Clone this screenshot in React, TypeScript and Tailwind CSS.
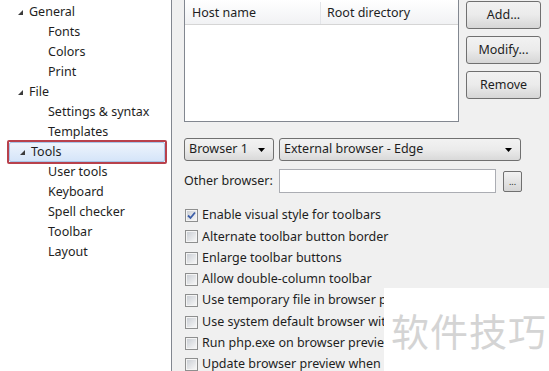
const font = { fontFamily: '"Segoe UI", "Noto Sans", "Liberation Sans", sans-serif' };

type TNode = { label: string; level: 0 | 1; selected?: boolean };

const TREE: TNode[] = [
  { label: 'General', level: 0 },
  { label: 'Fonts', level: 1 },
  { label: 'Colors', level: 1 },
  { label: 'Print', level: 1 },
  { label: 'File', level: 0 },
  { label: 'Settings & syntax', level: 1 },
  { label: 'Templates', level: 1 },
  { label: 'Tools', level: 0, selected: true },
  { label: 'User tools', level: 1 },
  { label: 'Keyboard', level: 1 },
  { label: 'Spell checker', level: 1 },
  { label: 'Toolbar', level: 1 },
  { label: 'Layout', level: 1 },
];

// the last rows sit under the watermark box, so their text is cut at its edge
const OPTIONS = [
  { label: 'Enable visual style for toolbars', checked: true, cut: false },
  { label: 'Alternate toolbar button border', checked: false, cut: false },
  { label: 'Enlarge toolbar buttons', checked: false, cut: false },
  { label: 'Allow double-column toolbar', checked: false, cut: false },
  { label: 'Use temporary file in browser preview', checked: false, cut: true },
  { label: 'Use system default browser with preview', checked: false, cut: true },
  { label: 'Run php.exe on browser preview', checked: false, cut: true },
  { label: 'Update browser preview when saving', checked: false, cut: true },
];

function Arrow() {
  return (
    <svg className="mr-[5px] ml-[17px]" height="7" viewBox="0 0 7 7" width="7">
      <path d="M6 1 6 6 1 6Z" fill="#3c3c3c" />
    </svg>
  );
}

function TreeItem({ node }: { node: TNode }) {
  if (node.selected) {
    return (
      <div className="flex h-[20px] items-center">
        <div className="ml-[7px] flex h-[24px] w-[160px] items-center rounded-[2px] border-2 border-[#b8414c]">
          <div className="flex h-full w-full items-center rounded-[2px] border border-[#a9c5e8] bg-gradient-to-b from-[#eef4fc] to-[#d5e5f9]">
            <svg className="mr-[5px] ml-[9px]" height="7" viewBox="0 0 7 7" width="7">
              <path d="M6 1 6 6 1 6Z" fill="#3c3c3c" />
            </svg>
            <span>{node.label}</span>
          </div>
        </div>
      </div>
    );
  }
  return (
    <div className="flex h-[20px] items-center">
      {node.level === 0 ? <Arrow /> : <span className="w-[48px]" />}
      <span>{node.label}</span>
    </div>
  );
}

function PushButton({ children, className = '' }: { children: string; className?: string }) {
  return (
    <div
      className={`flex items-center justify-center rounded-[3px] border border-[#707070] bg-gradient-to-b from-[#f2f2f2] via-[#ebebeb] to-[#d6d6d6] ${className}`}
    >
      {children}
    </div>
  );
}

function Combo({ label, className }: { label: string; className: string }) {
  return (
    <div
      className={`flex h-[23px] items-center rounded-[3px] border border-[#707070] bg-gradient-to-b from-[#f2f2f2] via-[#ebebeb] to-[#d9d9d9] pr-[8px] pl-[4px] ${className}`}
    >
      <span className="flex-1">{label}</span>
      <svg height="4" viewBox="0 0 7 4" width="7">
        <path d="M0 0h7L3.5 4Z" fill="#000" />
      </svg>
    </div>
  );
}

function CheckBox({ checked }: { checked: boolean }) {
  return (
    <div className="mr-[4px] flex h-[13px] w-[13px] shrink-0 items-center justify-center border border-[#8e8f8f] bg-white">
      <div className="flex h-[11px] w-[11px] items-center justify-center border border-[#f4f4f4] bg-gradient-to-br from-[#cbcfd5] to-[#f6f6f6]">
        {checked ? (
          <svg height="9" viewBox="0 0 9 9" width="9">
            <path d="M1 4.5 3.5 7 8 1.5" fill="none" stroke="#3c5ea8" strokeWidth="1.8" />
          </svg>
        ) : null}
      </div>
    </div>
  );
}

export default function App() {
  return (
    <div
      className="flex h-[371px] w-[549px] overflow-hidden bg-[#f0f0f0] text-[12.5px] text-[#1e1e1e]"
      style={font}
    >
      <div className="h-full w-[172px] shrink-0 border-r border-[#828790] bg-white pt-[2px]">
        {TREE.map((node) => (
          <TreeItem key={node.label} node={node} />
        ))}
      </div>

      <div className="relative flex-1 pl-[12px]">
        <div className="flex">
          <div className="h-[122px] w-[275px] border border-[#828790] border-t-0 bg-white">
            <div className="flex h-[25px] border-b border-[#d5d5d5] bg-gradient-to-b from-white to-[#f1f2f4] pt-[2px]">
              <div className="flex w-[136px] items-center border-r border-[#e3e5e9] pl-[7px]">Host name</div>
              <div className="flex flex-1 items-center pl-[6px]">Root directory</div>
            </div>
          </div>
          <div className="ml-[7px] flex flex-col gap-[7px] pt-[1px]">
            <PushButton className="h-[28px] w-[75px]">Add...</PushButton>
            <PushButton className="h-[28px] w-[75px]">Modify...</PushButton>
            <PushButton className="h-[28px] w-[75px]">Remove</PushButton>
          </div>
        </div>

        <div className="mt-[16px] flex gap-[5px]">
          <Combo className="w-[90px]" label="Browser 1" />
          <Combo className="w-[242px]" label="External browser - Edge" />
        </div>

        <div className="mt-[8px] flex items-center">
          <span className="w-[95px]">Other browser:</span>
          <div className="h-[24px] w-[217px] border border-[#abadb3] bg-white" />
          <div className="ml-[7px] flex h-[21px] w-[19px] items-center justify-center rounded-[2px] border border-[#707070] bg-gradient-to-b from-[#f2f2f2] to-[#d6d6d6] text-[9px] leading-none">
            ...
          </div>
        </div>

        <div className="mt-[12px] flex flex-col">
          {OPTIONS.map((o) => (
            <div className="flex h-[21.3px] items-center whitespace-nowrap pl-[1px]" key={o.label}>
              <CheckBox checked={o.checked} />
              <span className={o.cut ? 'block w-[184px] overflow-hidden' : ''}>{o.label}</span>
            </div>
          ))}
        </div>

        <div className="absolute top-[288px] right-0 bottom-0 left-[212px] flex items-center bg-white pl-[7px]">
          <span
            className="text-[38px] tracking-[1px] text-[#d4d4d4]"
            style={{ fontFamily: '"Noto Sans CJK SC", sans-serif' }}
          >
            软件技巧
          </span>
        </div>
      </div>
    </div>
  );
}
